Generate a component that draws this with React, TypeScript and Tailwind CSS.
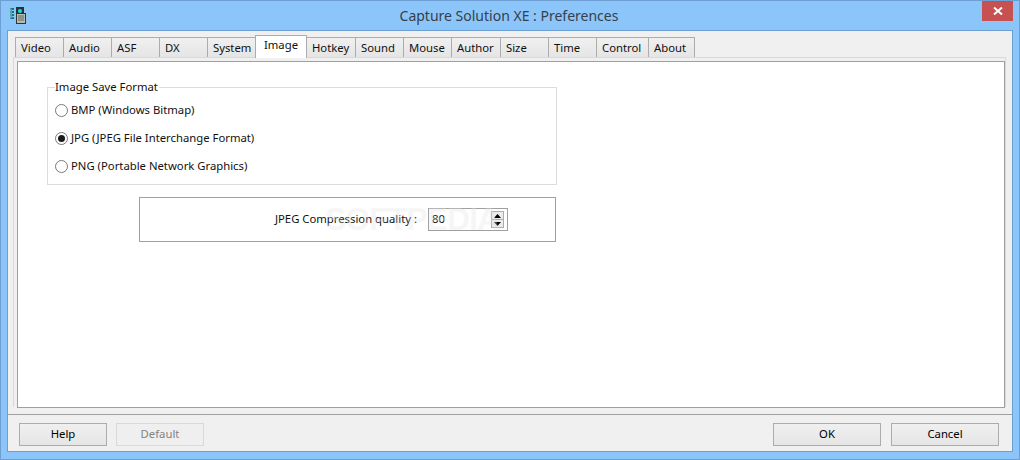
import React from 'react';

const FONT = "font-['Noto_Sans','Open_Sans',sans-serif]";

const tabs = [
  { label: 'Video', w: 'w-[49px]' },
  { label: 'Audio', w: 'w-[49px]' },
  { label: 'ASF', w: 'w-[49px]' },
  { label: 'DX', w: 'w-[49px]' },
  { label: 'System', w: 'w-[49px]' },
  { label: 'Image', w: 'w-[52px]', active: true },
  { label: 'Hotkey', w: 'w-[50px]' },
  { label: 'Sound', w: 'w-[49px]' },
  { label: 'Mouse', w: 'w-[49px]' },
  { label: 'Author', w: 'w-[50px]' },
  { label: 'Size', w: 'w-[49px]' },
  { label: 'Time', w: 'w-[49px]' },
  { label: 'Control', w: 'w-[53px]' },
  { label: 'About', w: 'w-[47px]' },
];

const AppIcon = () => (
  <svg width="18" height="18" viewBox="0 0 18 18" className="block">
    <rect x="0.5" y="2" width="3.5" height="11" fill="#0f7f6a" />
    <path d="M0.5 4.5h3.5M0.5 7.5h3.5M0.5 10.5h3.5" stroke="#8cc5f9" />
    <path d="M1.5 3v9" stroke="#19c4b0" />
    <rect x="6.5" y="7.5" width="9" height="10" fill="#b9b9ae" stroke="#333" />
    <path d="M8 10h6M8 12h6M8 14h6" stroke="#5c6f60" />
    <rect x="6" y="1" width="8" height="7" fill="#26343a" />
    <circle cx="10" cy="5" r="2" fill="#12e0e6" />
  </svg>
);

const Radio = ({ label, checked }: { label: string; checked?: boolean }) => (
  <div className="flex items-center h-[16px]">
    <span className="w-[13px] h-[13px] rounded-full border border-[#7a7a7a] bg-white flex items-center justify-center mr-[3px]">
      {checked && <span className="w-[7px] h-[7px] rounded-full bg-[#1a1a1a]" />}
    </span>
    <span>{label}</span>
  </div>
);

const FooterButton = ({ label, disabled, className = '' }: { label: string; disabled?: boolean; className?: string }) => (
  <div
    className={
      'h-[23px] flex items-center justify-center border ' +
      (disabled
        ? 'border-[#d9d9d9] bg-[#efefef] text-[#838383] '
        : 'border-[#acacac] bg-gradient-to-b from-[#f0f0f0] to-[#e5e5e5] text-black ') +
      className
    }
  >
    {label}
  </div>
);

export default function App() {
  return (
    <div className={`${FONT} w-[1020px] h-[460px] bg-[#8cc5f9] border border-[#6d9fd3] flex flex-col text-[11.3px] text-[#111111] overflow-hidden`}>
      {/* Title bar */}
      <div className="h-[29px] flex shrink-0">
        <div className="w-[28px] pl-[9px] pt-[5px]">
          <AppIcon />
        </div>
        <div className="flex-1 text-center text-[14px] leading-[30px] text-[#36404a] pl-[7px]">
          Capture Solution XE : Preferences
        </div>
        <div className="w-[31px] h-[20px] bg-[#c75050] mr-[6px] flex items-center justify-center">
          <svg width="10" height="8" viewBox="0 0 10 8">
            <path d="M1 0.5l8 7M9 0.5l-8 7" stroke="#fff" strokeWidth="2" />
          </svg>
        </div>
      </div>

      {/* Client area */}
      <div className="flex-1 mx-[6px] mb-[7px] border border-[#6d9fd3] bg-[#f0f0f0] flex flex-col min-h-0">
        <div className="flex-1 px-[5px] pt-[4px] flex flex-col min-h-0">
          {/* Tabs */}
          <div className="h-[22px] flex pl-[2px] shrink-0 items-end relative z-10">
            {tabs.map((t) =>
              t.active ? (
                <div
                  key={t.label}
                  className={`${t.w} h-[23px] -mb-[1px] -ml-[1px] bg-white border border-b-0 border-[#acacac] flex items-center justify-center pb-[4px]`}
                >
                  {t.label}
                </div>
              ) : (
                <div
                  key={t.label}
                  className={`${t.w} h-[20px] -ml-[1px] first:ml-0 border border-b-0 border-[#acacac] bg-gradient-to-b from-[#f0f0f0] to-[#e5e5e5] pl-[5px] leading-[19px] whitespace-nowrap`}
                >
                  {t.label}
                </div>
              )
            )}
          </div>

          {/* Tab page */}
          <div className="h-[350px] border border-[#d9d9d9] border-b-0 pl-[3px] pt-[3px] shrink-0 mr-[1px]">
            <div className="h-[347px] bg-white border border-[#a0a0a0] pt-[25px] pl-[29px]">
              <div className="relative w-[510px] h-[98px] border border-[#dcdcdc] flex flex-col pl-[7px] pt-[14px] gap-[12px]">
                <span className="absolute -top-[9px] left-[7px] bg-white pr-[1px] leading-[16px]">Image Save Format</span>
                <Radio label="BMP (Windows Bitmap)" />
                <Radio label="JPG (JPEG File Interchange Format)" checked />
                <Radio label="PNG (Portable Network Graphics)" />
              </div>
              <div className="relative ml-[92px] mt-[12px] w-[417px] h-[45px] border border-[#a0a0a0] flex items-center justify-end pr-[47px]">
                <span className="mr-[11px]">JPEG Compression quality :</span>
                <div className="w-[80px] h-[23px] border border-[#a0a0a0] flex items-center relative">
                  <span className="pl-[3px]">80</span>
                  <div className="absolute right-[3px] top-[2px] w-[13px] flex flex-col">
                    <div className="h-[9px] border border-[#acacac] bg-[#ececec] flex items-center justify-center">
                      <svg width="7" height="4" viewBox="0 0 7 4"><path d="M3.5 0L7 4H0z" fill="#000" /></svg>
                    </div>
                    <div className="h-[8px] border border-t-0 border-[#acacac] bg-[#ececec] flex items-center justify-center">
                      <svg width="7" height="4" viewBox="0 0 7 4"><path d="M0 0h7L3.5 4z" fill="#000" /></svg>
                    </div>
                  </div>
                </div>
                {/* faint watermark across the label and the input */}
                <span className="absolute left-[185px] top-[1px] font-['Liberation_Sans',sans-serif] font-bold text-[32px] leading-[40px] tracking-[-1px] text-white/30 [text-shadow:0_0_1px_rgba(0,0,0,0.05)] pointer-events-none whitespace-nowrap">
                  SOFTPEDIA
                </span>
              </div>
            </div>
          </div>
        </div>

        {/* Footer */}
        <div className="h-[37px] shrink-0 border-t border-[#a0a0a0] flex items-start pt-[8px] pl-[11px] pr-[13px]">
          <FooterButton label="Help" className="w-[88px]" />
          <FooterButton label="Default" disabled className="w-[88px] ml-[9px]" />
          <FooterButton label="OK" className="w-[108px] ml-auto" />
          <FooterButton label="Cancel" className="w-[108px] ml-[10px]" />
        </div>
      </div>
    </div>
  );
}
